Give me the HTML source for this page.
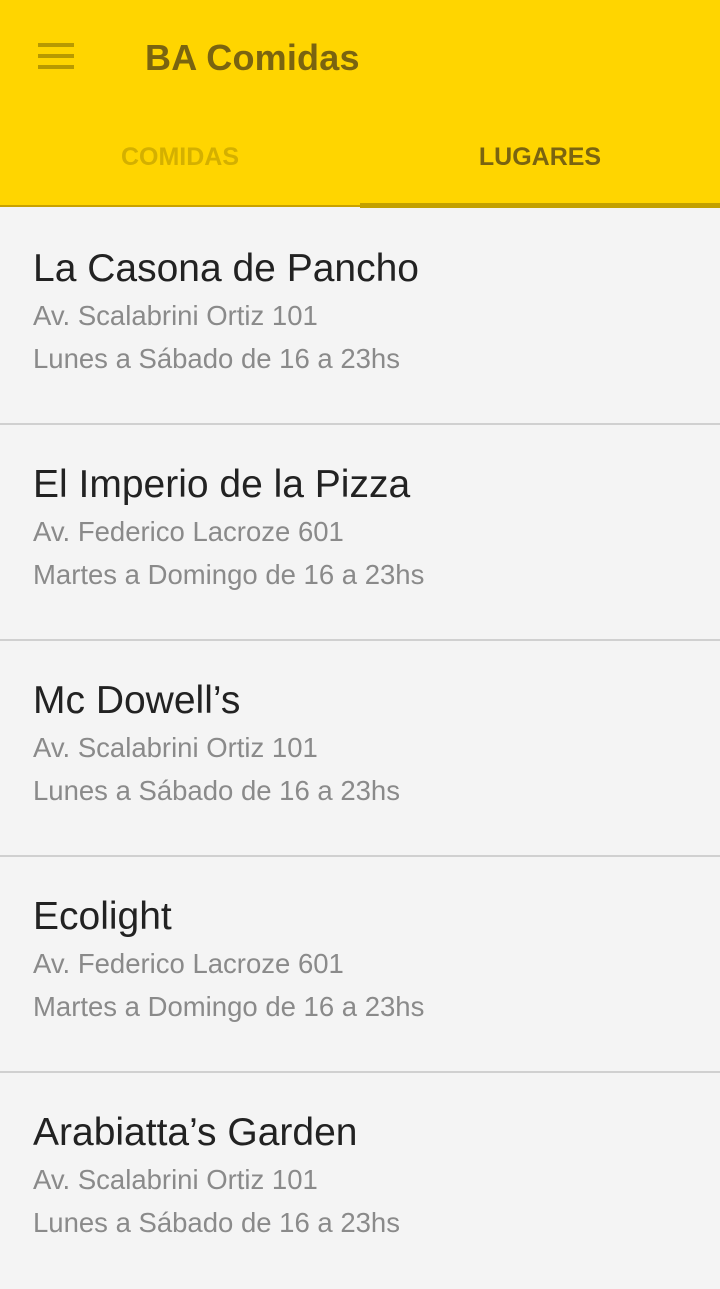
<!DOCTYPE html><html><head><style>
body{margin:0;width:720px;height:1280px;background:#f4f4f4;font-family:"Liberation Sans",sans-serif;overflow:hidden;position:relative}
.hdr{position:absolute;left:0;top:0;width:720px;height:207px;background:#ffd500;border-bottom:2px solid #c9a200;box-sizing:border-box}
.ham{position:absolute;left:38px;top:43px;width:36px;height:4px;background:#b89a00;box-shadow:0 11px 0 #b89a00,0 22px 0 #b89a00}
.title{position:absolute;left:145px;top:37px;font-size:36px;color:#7a6410;font-weight:bold;letter-spacing:0.2px}
.tab{position:absolute;top:143px;font-size:25px;font-weight:bold;width:360px;text-align:center}
.ind{position:absolute;left:360px;top:203px;width:360px;height:5px;background:#c2a000}
.item{position:absolute;left:0;width:720px;height:216px;border-bottom:2px solid #d0d0d0;box-sizing:border-box}
.item .n{position:absolute;left:33px;top:38px;font-size:39px;color:#222}
.item .a{position:absolute;left:33px;top:91px;font-size:27.5px;color:#8a8a8a}
.item .h{position:absolute;left:33px;top:134px;font-size:27.5px;color:#8a8a8a}
</style></head><body>
<div class="hdr"><div class="ham"></div><div class="title">BA Comidas</div>
<div class="tab" style="left:0;color:#d4b000">COMIDAS</div>
<div class="tab" style="left:360px;color:#7a6410">LUGARES</div>
<div class="ind"></div></div>
<div class="item" style="top:209px"><div class="n">La Casona de Pancho</div><div class="a">Av. Scalabrini Ortiz 101</div><div class="h">Lunes a Sábado de 16 a 23hs</div></div>
<div class="item" style="top:425px"><div class="n">El Imperio de la Pizza</div><div class="a">Av. Federico Lacroze 601</div><div class="h">Martes a Domingo de 16 a 23hs</div></div>
<div class="item" style="top:641px"><div class="n">Mc Dowell’s</div><div class="a">Av. Scalabrini Ortiz 101</div><div class="h">Lunes a Sábado de 16 a 23hs</div></div>
<div class="item" style="top:857px"><div class="n">Ecolight</div><div class="a">Av. Federico Lacroze 601</div><div class="h">Martes a Domingo de 16 a 23hs</div></div>
<div class="item" style="top:1073px;border:none"><div class="n">Arabiatta’s Garden</div><div class="a">Av. Scalabrini Ortiz 101</div><div class="h">Lunes a Sábado de 16 a 23hs</div></div>
</body></html>
